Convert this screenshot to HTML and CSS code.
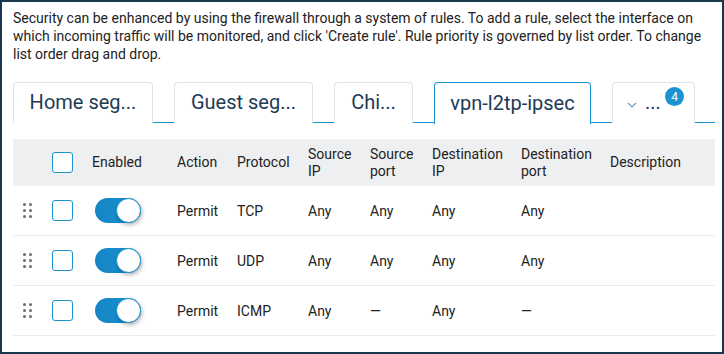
FILE: index.html
```html
<!DOCTYPE html>
<html>
<head>
<meta charset="utf-8">
<link rel="stylesheet" href="styles.css">
</head>
<body>
<div class="frame">
  <p class="intro">Security can be enhanced by using the firewall through a system of rules. To add a rule, select the interface on which incoming traffic will be monitored, and click 'Create rule'. Rule priority is governed by list order. To change list order drag and drop.</p>
  <div class="tabs">
    <div class="tab w1">Home seg...</div>
    <div class="tab w2">Guest seg...</div>
    <div class="tab w3">Chi...</div>
    <div class="tab w4 active">vpn-l2tp-ipsec</div>
    <div class="tab w5 more">
      <svg class="chev" width="10" height="6" viewBox="0 0 10 6"><path d="M1 1l4 4 4-4" fill="none" stroke="#7a9bbb" stroke-width="1.2"/></svg>
      <span class="dots">...</span>
      <span class="badge">4</span>
    </div>
  </div>
  <div class="table">
    <div class="row head">
      <div class="cell"></div>
      <div class="cell"><span class="cb"></span></div>
      <div class="cell">Enabled</div>
      <div class="cell">Action</div>
      <div class="cell">Protocol</div>
      <div class="cell">Source<br>IP</div>
      <div class="cell">Source<br>port</div>
      <div class="cell">Destination<br>IP</div>
      <div class="cell">Destination<br>port</div>
      <div class="cell">Description</div>
    </div>
    <div class="row">
      <div class="cell"><span class="handle"><i></i><i></i><i></i><i></i><i></i><i></i></span></div>
      <div class="cell"><span class="cb"></span></div>
      <div class="cell"><span class="toggle"><span class="knob"></span></span></div>
      <div class="cell">Permit</div>
      <div class="cell">TCP</div>
      <div class="cell">Any</div>
      <div class="cell">Any</div>
      <div class="cell">Any</div>
      <div class="cell">Any</div>
      <div class="cell"></div>
    </div>
    <div class="row">
      <div class="cell"><span class="handle"><i></i><i></i><i></i><i></i><i></i><i></i></span></div>
      <div class="cell"><span class="cb"></span></div>
      <div class="cell"><span class="toggle"><span class="knob"></span></span></div>
      <div class="cell">Permit</div>
      <div class="cell">UDP</div>
      <div class="cell">Any</div>
      <div class="cell">Any</div>
      <div class="cell">Any</div>
      <div class="cell">Any</div>
      <div class="cell"></div>
    </div>
    <div class="row">
      <div class="cell"><span class="handle"><i></i><i></i><i></i><i></i><i></i><i></i></span></div>
      <div class="cell"><span class="cb"></span></div>
      <div class="cell"><span class="toggle"><span class="knob"></span></span></div>
      <div class="cell">Permit</div>
      <div class="cell">ICMP</div>
      <div class="cell">Any</div>
      <div class="cell">—</div>
      <div class="cell">Any</div>
      <div class="cell">—</div>
      <div class="cell"></div>
    </div>
  </div>
</div>
</body>
</html>
```
FILE: styles.css
```css
* { box-sizing: border-box; }
html, body { margin: 0; padding: 0; }
body {
  width: 724px;
  height: 354px;
  background: #18384f;
  font-family: Roboto, "Liberation Sans", sans-serif;
  color: #222;
}
.frame {
  width: 724px;
  height: 354px;
  border: 2px solid #18384f;
  background: #fff;
  padding: 7px 7px 0 11px;
}
.intro {
  margin: 0;
  font-size: 14px;
  line-height: 18px;
  color: #222;
}
.tabs {
  display: flex;
  gap: 21px;
  margin-top: 19px;
  border-bottom: 1px solid #1a93d0;
  height: 41px;
  width: 702px;
}
.tab {
  height: 41px;
  border: 1px solid #dde3ea;
  border-bottom: none;
  border-radius: 4px 4px 0 0;
  font-size: 20px;
  color: #1e3a56;
  display: flex;
  align-items: center;
  justify-content: center;
  padding-bottom: 2px;
  white-space: nowrap;
  background: #fff;
}
.tab.active {
  border-color: #1a93d0;
  height: 42px;
  margin-bottom: -1px;
}
.w1 { width: 140px; }
.w2 { width: 139px; }
.w3 { width: 79px; }
.w4 { width: 157px; }
.w5 { width: 83px; }
.more {
  position: relative;
  justify-content: flex-start;
  padding-left: 14px;
  gap: 8px;
}
.chev { margin-top: 6px; }
.dots { font-size: 20px; color: #1e3a56; }
.badge {
  position: absolute;
  left: 52px;
  top: 4px;
  width: 19px;
  height: 19px;
  border-radius: 50%;
  background: #1a93d0;
  color: #fff;
  font-size: 12px;
  display: flex;
  align-items: center;
  justify-content: center;
}
.table {
  margin-top: 16px;
  width: 702px;
}
.row {
  display: grid;
  grid-template-columns: 39px 40px 85px 60px 71px 62px 62px 89px 89px 105px;
  height: 50px;
  align-items: center;
  border-bottom: 1px solid #ebebeb;
  font-size: 14px;
  color: #222;
}
.row.head {
  background: #eeeff1;
  height: 47px;
  border-bottom: none;
  line-height: 17px;
}
.cell { padding: 0; }
.handle {
  display: grid;
  grid-template-columns: 3px 3px;
  gap: 3px 3px;
  margin-left: 10px;
  width: 9px;
}
.handle i {
  display: block;
  width: 3px;
  height: 3px;
  border-radius: 50%;
  background: #6b6b6b;
}
.cb {
  display: block;
  width: 21px;
  height: 21px;
  border: 1px solid #1a93d0;
  border-radius: 3px;
  background: #fff;
}
.toggle {
  display: block;
  position: relative;
  width: 46px;
  height: 25px;
  margin-left: 3px;
  border-radius: 13px;
  background: linear-gradient(90deg, #1684c4, #1a95d4);
}
.knob {
  position: absolute;
  right: 0;
  top: 0;
  width: 25px;
  height: 25px;
  border-radius: 50%;
  background: #fff;
  border: 1px solid #1a93d0;
  box-shadow: 1px 2px 4px rgba(0,0,0,0.3);
}
```
